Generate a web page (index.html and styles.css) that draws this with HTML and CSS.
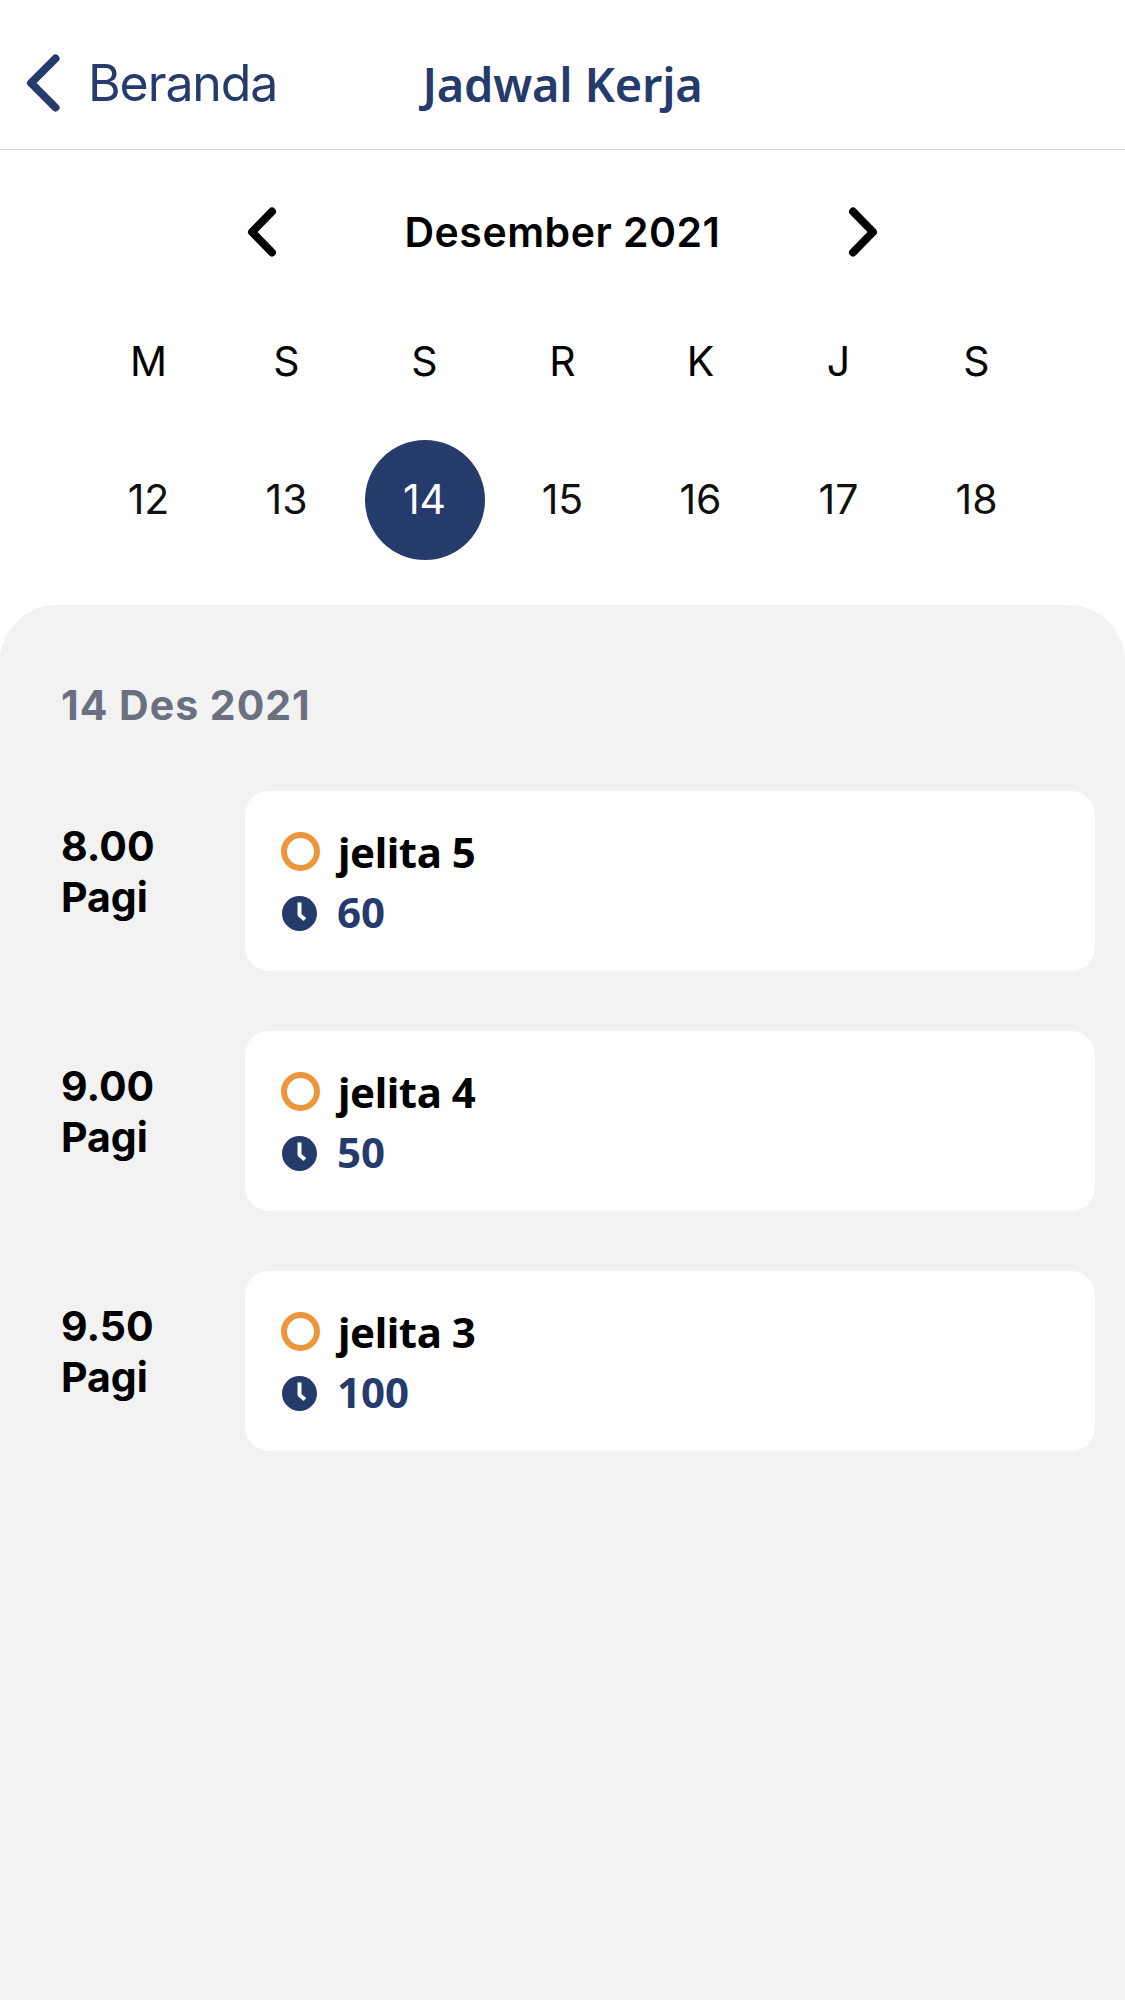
FILE: index.html
```html
<!DOCTYPE html>
<html lang="id">
<head>
    <meta charset="UTF-8">
    <meta name="viewport" content="width=device-width, initial-scale=1.0">
    <title>Jadwal Kerja</title>
    <link rel="stylesheet" href="styles.css">
</head>
<body>

<header class="header">
    <a class="back">
        <svg width="36" height="60" viewBox="0 0 36 60"><path d="M31.5 5.5L7 30L31.5 54.5"/></svg>
        <span>Beranda</span>
    </a>
    <h1>Jadwal Kerja</h1>
</header>

<!-- Calendar -->
<section class="calendar">
    <div class="month">
        <svg width="30" height="50" viewBox="0 0 30 50"><path d="M25 4.5L5 25L25 45.5"/></svg>
        <h2>Desember 2021</h2>
        <svg width="30" height="50" viewBox="0 0 30 50"><path d="M5 4.5L25 25L5 45.5"/></svg>
    </div>
    <div class="week names">
        <span>M</span><span>S</span><span>S</span><span>R</span><span>K</span><span>J</span><span>S</span>
    </div>
    <div class="week dates">
        <span>12</span>
        <span>13</span>
        <span class="active">14</span>
        <span>15</span>
        <span>16</span>
        <span>17</span>
        <span>18</span>
    </div>
</section>

<!-- Schedule -->
<main class="schedule">
    <h3>14 Des 2021</h3>

    <div class="row">
        <div class="time">8.00<br>Pagi</div>
        <div class="card">
            <div class="line name"><i class="ring"></i><span>jelita 5</span></div>
            <div class="line duration">
                <svg class="clock" width="35" height="35" viewBox="0 0 35 35"><circle cx="17.5" cy="17.5" r="17.5"/><path d="M17.5 6.5V19L23 23.5"/></svg>
                <span>60</span>
            </div>
        </div>
    </div>

    <div class="row">
        <div class="time">9.00<br>Pagi</div>
        <div class="card">
            <div class="line name"><i class="ring"></i><span>jelita 4</span></div>
            <div class="line duration">
                <svg class="clock" width="35" height="35" viewBox="0 0 35 35"><circle cx="17.5" cy="17.5" r="17.5"/><path d="M17.5 6.5V19L23 23.5"/></svg>
                <span>50</span>
            </div>
        </div>
    </div>

    <div class="row">
        <div class="time">9.50<br>Pagi</div>
        <div class="card">
            <div class="line name"><i class="ring"></i><span>jelita 3</span></div>
            <div class="line duration">
                <svg class="clock" width="35" height="35" viewBox="0 0 35 35"><circle cx="17.5" cy="17.5" r="17.5"/><path d="M17.5 6.5V19L23 23.5"/></svg>
                <span>100</span>
            </div>
        </div>
    </div>
</main>

</body>
</html>
```
FILE: styles.css
```css
* {
    box-sizing: border-box;
}
body {
    margin: 0;
    min-height: 2000px;
    display: flex;
    flex-direction: column;
    background-color: #fff;
    color: #000;
    font-family: Inter, "Liberation Sans", sans-serif;
    font-size: 41px;
}
h1, h2, h3 {
    margin: 0;
}
svg {
    display: block;
    flex: none;
    fill: none;
    stroke-linecap: round;
    stroke-linejoin: round;
}
.header {
    display: grid;
    grid-template-columns: 1fr auto 1fr;
    align-items: center;
    height: 150px;
    padding: 17px 0 0 24px;
    border-bottom: 1px solid #d6d6d8;
    color: #243b6c;
}
.header h1 {
    margin-left: -24px;
    padding-top: 2px;
    font-family: "Noto Sans", sans-serif;
    font-size: 47px;
    font-weight: 600;
    line-height: 60px;
    letter-spacing: -0.2px;
}
.back {
    display: flex;
    align-items: center;
    gap: 28px;
    font-size: 50px;
    line-height: 60px;
    letter-spacing: -1.1px;
}
.back svg {
    stroke: #243b6c;
    stroke-width: 8;
}
.month {
    display: flex;
    justify-content: space-between;
    align-items: center;
    height: 165px;
    padding: 0 247px 1px;
}
.month h2 {
    font-size: 41px;
    font-weight: 600;
    letter-spacing: 0.5px;
}
.month svg {
    stroke: #000;
    stroke-width: 8;
}
.week {
    display: grid;
    grid-template-columns: repeat(7, 138px);
    justify-content: center;
    justify-items: center;
}
.names {
    line-height: 92px;
}
.dates {
    margin: 33px 0 45px;
    color: #111;
}
.dates span {
    width: 120px;
    height: 120px;
    line-height: 118px;
    text-align: center;
}
.dates .active {
    border-radius: 50%;
    background-color: #243b6c;
    color: #fff;
}
.schedule {
    flex: 1;
    padding: 70px 30px 0 61px;
    border-radius: 57px 57px 0 0;
    background-color: #f2f2f2;
}
.schedule h3 {
    margin-bottom: 56px;
    color: #6b7080;
    font-size: 41px;
    font-weight: 700;
    line-height: 60px;
    letter-spacing: 1px;
}
.row {
    display: flex;
    margin-bottom: 60px;
}
.time {
    width: 184px;
    padding-top: 30px;
    font-weight: 700;
    line-height: 51px;
}
.card {
    flex: 1;
    height: 180px;
    padding: 30px 36px;
    border-radius: 24px;
    background-color: #fff;
}
.line {
    display: flex;
    align-items: center;
    height: 60px;
    font-family: "Noto Sans", sans-serif;
    font-size: 42px;
    font-weight: 700;
}
.line span {
    padding-top: 2px;
    line-height: 58px;
}
.name {
    letter-spacing: -0.45px;
}
.ring {
    width: 39px;
    height: 39px;
    margin-right: 18px;
    border: 6px solid #ee963c;
    border-radius: 50%;
}
.duration {
    color: #243b6c;
}
.clock {
    margin: 5px 20px 0 1px;
    stroke: #fff;
    stroke-width: 4;
}
.clock circle {
    fill: #243b6c;
    stroke: none;
}
.clock path {
    stroke-linecap: butt;
}
```
